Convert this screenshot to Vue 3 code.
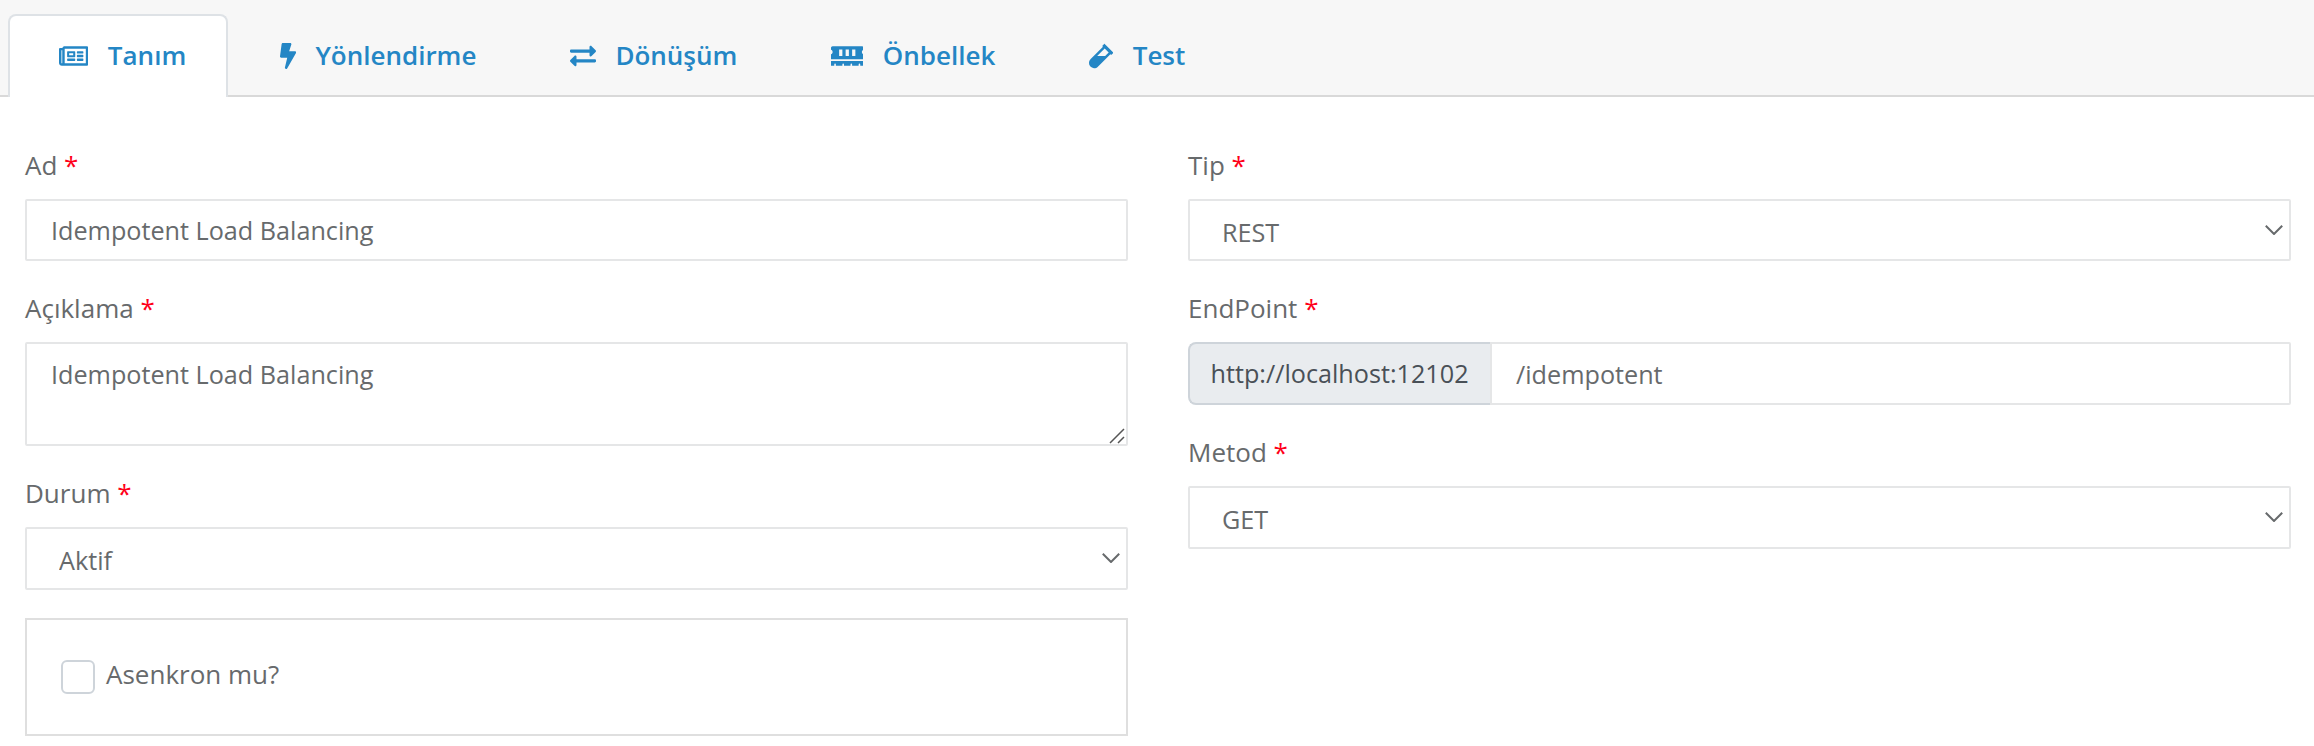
<script setup>
import { ref } from 'vue'

const tabs = [
  {
    label: 'Tanım',
    width: 576,
    path: 'M552 64H112c-20.858 0-38.643 13.377-45.248 32H24c-13.255 0-24 10.745-24 24v272c0 30.928 25.072 56 56 56h496c13.255 0 24-10.745 24-24V88c0-13.255-10.745-24-24-24zM48 392V144h16v248c0 4.411-3.589 8-8 8s-8-3.589-8-8zm480 8H111.422c.374-2.614.578-5.283.578-8V112h416v288zM172 280h136c6.627 0 12-5.373 12-12v-96c0-6.627-5.373-12-12-12H172c-6.627 0-12 5.373-12 12v96c0 6.627 5.373 12 12 12zm28-80h80v40h-80v-40zm-40 140v-24c0-6.627 5.373-12 12-12h136c6.627 0 12 5.373 12 12v24c0 6.627-5.373 12-12 12H172c-6.627 0-12-5.373-12-12zm192 0v-24c0-6.627 5.373-12 12-12h104c6.627 0 12 5.373 12 12v24c0 6.627-5.373 12-12 12H364c-6.627 0-12-5.373-12-12zm0-144v-24c0-6.627 5.373-12 12-12h104c6.627 0 12 5.373 12 12v24c0 6.627-5.373 12-12 12H364c-6.627 0-12-5.373-12-12zm0 72v-24c0-6.627 5.373-12 12-12h104c6.627 0 12 5.373 12 12v24c0 6.627-5.373 12-12 12H364c-6.627 0-12-5.373-12-12z',
  },
  {
    label: 'Yönlendirme',
    width: 320,
    path: 'M296 160H180.6l42.6-129.8C227.2 15 215.7 0 200 0H56C44 0 33.8 8.9 32.2 20.8l-32 240C-1.7 275.2 9.5 288 24 288h118.7L96.6 482.5c-3.6 15.2 8 29.5 23.3 29.5 8.4 0 16.4-4.4 20.8-12l176-304c9.3-15.9-2.2-36-20.7-36z',
  },
  {
    label: 'Dönüşüm',
    width: 512,
    path: 'M0 168v-16c0-13.255 10.745-24 24-24h360V80c0-21.367 25.899-32.042 40.971-16.971l80 80c9.372 9.373 9.372 24.569 0 33.941l-80 80C409.956 271.982 384 261.456 384 240v-48H24c-13.255 0-24-10.745-24-24zm488 152H128v-48c0-21.314-25.862-32.08-40.971-16.971l-80 80c-9.372 9.373-9.372 24.569 0 33.941l80 80C102.057 463.997 128 453.437 128 432v-48h360c13.255 0 24-10.745 24-24v-16c0-13.255-10.745-24-24-24z',
  },
  {
    label: 'Önbellek',
    width: 640,
    path: 'M640 130.94V96c0-17.67-14.33-32-32-32H32C14.33 64 0 78.33 0 96v34.94c18.6 6.61 32 24.19 32 45.06s-13.4 38.45-32 45.06V320h640v-98.94c-18.6-6.61-32-24.19-32-45.06s13.4-38.45 32-45.06zM224 256h-64V128h64v128zm128 0h-64V128h64v128zm128 0h-64V128h64v128zM0 448h64v-26.67c0-8.84 7.16-16 16-16s16 7.16 16 16V448h128v-26.67c0-8.84 7.16-16 16-16s16 7.16 16 16V448h128v-26.67c0-8.84 7.16-16 16-16s16 7.16 16 16V448h128v-26.67c0-8.84 7.16-16 16-16s16 7.16 16 16V448h64v-96H0v96z',
  },
  {
    label: 'Test',
    width: 480,
    path: 'M477.7 186.1L309.5 18.3c-3.1-3.1-8.2-3.1-11.3 0l-34 33.9c-3.1 3.1-3.1 8.2 0 11.3l11.2 11.1L33 316.5c-38.8 38.7-45.1 102-9.4 143.5 20.6 24 49.5 36 78.4 35.9 26.4 0 52.8-10 72.9-30.1l246.3-245.7 11.2 11.1c3.1 3.1 8.2 3.1 11.3 0l34-33.9c3.1-3 3.1-8.1 0-11.2zM318 256H161l148-147.7 78.5 78.3L318 256z',
  },
]

const activeTab = ref(0)
const name = ref('Idempotent Load Balancing')
const description = ref('Idempotent Load Balancing')
const status = ref('Aktif')
const isAsync = ref(false)
const type = ref('REST')
const endpoint = ref('/idempotent')
const method = ref('GET')
</script>

<template>
  <div class="page">
    <nav class="tabs">
      <button
        v-for="(tab, i) in tabs"
        :key="tab.label"
        type="button"
        class="tab"
        :class="{ active: activeTab === i }"
        @click="activeTab = i"
      >
        <svg class="tab-icon" :viewBox="`0 0 ${tab.width} 512`" :style="{ width: `${(tab.width / 512) * 26}px` }">
          <path :d="tab.path" />
        </svg>
        <span>{{ tab.label }}</span>
      </button>
    </nav>

    <form class="form" @submit.prevent>
      <div class="column">
        <div class="field">
          <label for="name">Ad <span class="required">*</span></label>
          <input id="name" v-model="name" class="control short" type="text" />
        </div>
        <div class="field">
          <label for="description">Açıklama <span class="required">*</span></label>
          <div class="wrap">
            <textarea id="description" v-model="description" class="control area" spellcheck="false"></textarea>
            <svg class="grip" viewBox="0 0 16 16"><path d="M1 15 15 1M9 15l6-6" /></svg>
          </div>
        </div>
        <div class="field">
          <label for="status">Durum <span class="required">*</span></label>
          <div class="wrap">
            <select id="status" v-model="status" class="control select">
              <option>Aktif</option>
              <option>Pasif</option>
            </select>
            <svg class="chevron" viewBox="0 0 18 10"><path d="M.8.8 9 9 17.2.8" /></svg>
          </div>
        </div>
        <label class="check-panel">
          <input v-model="isAsync" type="checkbox" class="check" />
          <span>Asenkron mu?</span>
        </label>
      </div>

      <div class="column">
        <div class="field">
          <label for="type">Tip <span class="required">*</span></label>
          <div class="wrap">
            <select id="type" v-model="type" class="control select short">
              <option>REST</option>
              <option>SOAP</option>
            </select>
            <svg class="chevron" viewBox="0 0 18 10"><path d="M.8.8 9 9 17.2.8" /></svg>
          </div>
        </div>
        <div class="field">
          <label for="endpoint">EndPoint <span class="required">*</span></label>
          <div class="group">
            <span class="addon">http://localhost:12102</span>
            <input id="endpoint" v-model="endpoint" class="control" type="text" />
          </div>
        </div>
        <div class="field">
          <label for="method">Metod <span class="required">*</span></label>
          <div class="wrap">
            <select id="method" v-model="method" class="control select">
              <option>GET</option>
              <option>POST</option>
            </select>
            <svg class="chevron" viewBox="0 0 18 10"><path d="M.8.8 9 9 17.2.8" /></svg>
          </div>
        </div>
      </div>
    </form>
  </div>
</template>

<style>
body {
  margin: 0;
  background: #fff;
}
</style>

<style scoped>
.page,
.page * {
  box-sizing: border-box;
}
.page {
  height: 746px;
  overflow: hidden;
  background: #fff;
  color: #676a6c;
  font-family: 'Open Sans', sans-serif;
  font-size: 26px;
  line-height: 39px;
}
.tabs {
  display: flex;
  gap: 1px;
  height: 97px;
  padding: 14px 8px 0;
  border-bottom: 2px solid #d9d9d9;
  background: #f7f7f7;
}
.tab {
  display: flex;
  align-items: center;
  gap: 19.6px;
  height: 83px;
  padding: 0 39.4px 2px 49px;
  border: 2px solid transparent;
  border-bottom: 0;
  border-radius: 8px 8px 0 0;
  background: transparent;
  color: #2486c5;
  font: 600 26px/39px 'Open Sans', sans-serif;
  white-space: nowrap;
}
.tab.active {
  border-color: #dee2e6;
  background: #fff;
}
.tab-icon {
  flex: none;
  height: 26px;
  fill: currentColor;
}
.form {
  display: grid;
  grid-template-columns: 1103px 1103px;
  gap: 60px;
  padding: 49px 0 0 25px;
}
.field {
  margin-bottom: 28px;
}
.field > label {
  display: block;
  margin-bottom: 14px;
}
.required {
  color: #ff0019;
}
.wrap {
  position: relative;
}
.control {
  display: block;
  width: 100%;
  height: 63px;
  margin: 0;
  padding: 0 24px;
  border: 2px solid #e5e6e7;
  border-radius: 2px;
  outline: none;
  background: #fff;
  color: #676a6c;
  font: 400 25.2px/39px 'Open Sans', sans-serif;
  appearance: none;
}
.control.short {
  height: 62px;
}
.control.area {
  height: 104px;
  padding-top: 11px;
  resize: none;
}
.control.select {
  padding: 4px 32px 0;
}
.chevron {
  position: absolute;
  top: 26px;
  right: 8px;
  width: 18px;
  height: 10px;
  fill: none;
  stroke: #676a6c;
  stroke-width: 2;
}
.grip {
  position: absolute;
  right: 3px;
  bottom: 2px;
  width: 16px;
  height: 16px;
  fill: none;
  stroke: #555;
  stroke-width: 1.5;
}
.group {
  display: flex;
}
.addon {
  flex: none;
  width: 302px;
  height: 63px;
  padding: 10px 0 0 20.5px;
  border: 2px solid #ced4da;
  border-right: 0;
  border-radius: 8px 0 0 8px;
  background: #e9ecef;
  color: #495057;
  font-size: 25.2px;
}
.group .control {
  flex: 1;
  min-width: 0;
  border-radius: 0 2px 2px 0;
}
.check-panel {
  display: flex;
  gap: 11px;
  height: 118px;
  margin-top: 28px;
  padding: 35px 34px 0;
  border: 2px solid #dfdfdf;
}
.check {
  width: 34px;
  height: 34px;
  margin: 5px 0 0;
  border: 2px solid #ced4da;
  border-radius: 6px;
  background: #fff;
  appearance: none;
}
.check:checked {
  background: #2486c5;
}
</style>
